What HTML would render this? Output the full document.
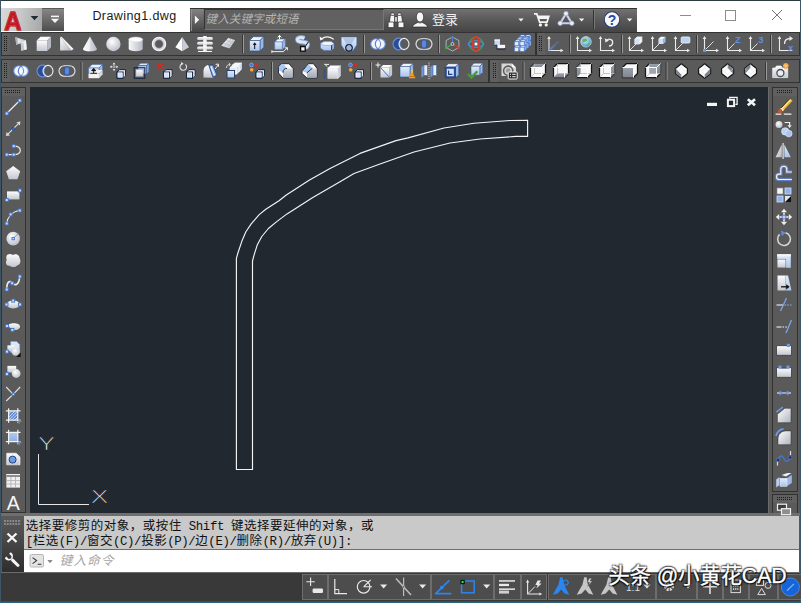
<!DOCTYPE html>
<html lang="zh-CN"><head><meta charset="utf-8"><title>Drawing1.dwg</title>
<style>
html,body{margin:0;padding:0;background:#404040;}
body{width:801px;height:603px;overflow:hidden;position:relative;font-family:"Liberation Sans","Noto Sans CJK SC",sans-serif;}
#app{position:absolute;left:0;top:0;width:801px;height:603px;overflow:hidden;background:#585858;}
.abs{position:absolute;}
#title{left:0;top:0;width:801px;height:32px;background:#fff;border-top:1px solid #2c3b3e;border-left:1px solid #39474f;border-right:1px solid #39474f;box-sizing:border-box;}
#abtn{left:1px;top:8px;width:41px;height:23px;background:linear-gradient(100deg,#d9d9d9,#c9c9c9 45%,#a6a6a6);}
#qbtn{left:42px;top:8px;width:21.5px;height:23px;background:linear-gradient(#858585,#4e4e4e);border-top:1px solid #5a5a5a;box-sizing:border-box;}
#dname{left:92.4px;top:8px;font-size:12.5px;color:#1a1a1a;letter-spacing:0.42px;white-space:nowrap;line-height:17px;}
#info{left:190px;top:8px;width:447px;height:24px;background:linear-gradient(#727272,#5a5a5a 45%,#454545);border-top:1px solid #333;box-sizing:border-box;}
#sbox{left:204px;top:9px;width:180px;height:21px;background:#616161;border:1px solid #343434;border-bottom-color:#777;border-right-color:#777;box-sizing:border-box;}
#sph{left:205.6px;top:11px;font-size:11.6px;font-style:italic;color:#b4b4b4;white-space:nowrap;line-height:16px;letter-spacing:0px;}
#login{left:432px;top:12px;font-size:13px;color:#f2f2f2;white-space:nowrap;line-height:16px;}
.tb{background:#5a5a5a;border:1px solid #323232;box-sizing:border-box;}
.grip{background:#606060;}
#draw{left:30px;top:87px;width:738px;height:426px;background:#212830;}
#cmdh{left:2px;top:516px;width:22px;height:56px;background:linear-gradient(#5a5a5a,#2e2e2e);}
#hist{left:24px;top:516px;width:775px;height:34px;background:#c9c9c9;border-bottom:1px solid #6e6e6e;box-sizing:border-box;font-family:"Liberation Mono","Noto Sans CJK SC",monospace;color:#111;}
.hl{position:absolute;left:1.7px;white-space:nowrap;font-size:12.5px;line-height:16px;letter-spacing:0.5px;}
.hl i{font-style:normal;font-size:12.4px;letter-spacing:-0.39px;}
#inp{left:24px;top:550px;width:775px;height:22px;background:#fff;}
#iph{left:59.6px;top:553px;font-size:12.8px;font-style:italic;color:#a6a6a6;white-space:nowrap;line-height:16px;letter-spacing:0.9px;}
#status{left:0;top:572px;width:801px;height:31px;background:#393939;}
#wm{left:608.5px;top:563px;font-size:21.2px;line-height:26px;color:#fff;white-space:nowrap;-webkit-text-stroke:0.35px #fff;text-shadow:1px 1px 1px #000,-1px -1px 1px rgba(0,0,0,.55),1px -1px 1px rgba(0,0,0,.55),-1px 1px 1px rgba(0,0,0,.55),0 0 3px rgba(0,0,0,.6);}
svg{position:absolute;left:0;top:0;overflow:visible;}
</style></head>
<body><div id="app">
<div id="title" class="abs"></div>
<div id="abtn" class="abs"></div><div id="qbtn" class="abs"></div>
<div id="dname" class="abs">Drawing1.dwg</div>
<div id="info" class="abs"></div><div id="sbox" class="abs"></div>
<div id="sph" class="abs">键入关键字或短语</div>
<div id="login" class="abs">登录</div>
<div class="abs tb" style="left:1px;top:32px;width:535px;height:24px"></div>
<div class="abs tb" style="left:536px;top:32px;width:264px;height:24px"></div>
<div class="abs tb" style="left:1px;top:59px;width:488px;height:24px"></div>
<div class="abs tb" style="left:489px;top:59px;width:311px;height:24px"></div>
<div class="abs tb" style="left:1px;top:87px;width:25px;height:426px"></div>
<div class="abs tb" style="left:772px;top:87px;width:26px;height:405px"></div>
<div class="abs tb" style="left:772px;top:494px;width:26px;height:24px"></div>
<div class="abs grip" style="left:2px;top:33px;width:8px;height:22px"></div>
<div class="abs grip" style="left:537px;top:33px;width:8px;height:22px"></div>
<div class="abs grip" style="left:2px;top:60px;width:8px;height:22px"></div>
<div class="abs grip" style="left:490px;top:60px;width:8px;height:22px"></div>
<div class="abs grip" style="left:2px;top:88px;width:23px;height:8px"></div>
<div class="abs grip" style="left:773px;top:88px;width:24px;height:8px"></div>
<div class="abs grip" style="left:773px;top:495px;width:24px;height:8px"></div>
<div id="draw" class="abs"></div>
<div class="abs" style="left:768px;top:87px;width:1px;height:426px;background:#6a6a6a"></div>
<div class="abs" style="left:0;top:513px;width:801px;height:3px;background:#6e6e6e"></div>
<div id="cmdh" class="abs"></div>
<div id="hist" class="abs"><div class="hl" style="top:3px">选择要修剪的对象，或按住<i> Shift </i>键选择要延伸的对象，或</div><div class="hl" style="top:18px"><i>[</i>栏选<i>(F)/</i>窗交<i>(C)/</i>投影<i>(P)/</i>边<i>(E)/</i>删除<i>(R)/</i>放弃<i>(U)]:</i></div></div>
<div id="inp" class="abs"></div>
<div id="iph" class="abs">键入命令</div>
<div id="status" class="abs"></div>
<div class="abs" style="left:0;top:0;width:1px;height:603px;background:#3e5566"></div><div class="abs" style="left:800px;top:0;width:1px;height:603px;background:#3e5566"></div>
<svg width="801" height="603" viewBox="0 0 801 603"><defs>
<linearGradient id="gG" x1="0" y1="0" x2="0" y2="1"><stop offset="0" stop-color="#fdfdfe"/><stop offset="1" stop-color="#c3c7cf"/></linearGradient>
<linearGradient id="gH" x1="0" y1="0" x2="1" y2="0"><stop offset="0" stop-color="#fafafc"/><stop offset="1" stop-color="#b4b9c2"/></linearGradient>
<linearGradient id="gB" x1="0" y1="0" x2="0" y2="1"><stop offset="0" stop-color="#e3edfb"/><stop offset="1" stop-color="#a9c4ea"/></linearGradient>
<linearGradient id="gD" x1="0" y1="0" x2="1" y2="1"><stop offset="0" stop-color="#fff"/><stop offset="1" stop-color="#aeb3bc"/></linearGradient>
<linearGradient id="gF" x1="0" y1="0" x2="0" y2="1"><stop offset="0" stop-color="#d6d9de"/><stop offset="1" stop-color="#a4a9b3"/></linearGradient>
<linearGradient id="gX" x1="0" y1="0" x2="0" y2="1"><stop offset="0" stop-color="#9aa1ab"/><stop offset="1" stop-color="#7f8690"/></linearGradient>
<linearGradient id="gQ" x1="0" y1="0" x2="0" y2="1"><stop offset="0" stop-color="#838383"/><stop offset="1" stop-color="#474747"/></linearGradient>
<radialGradient id="gS" cx="0.4" cy="0.35" r="0.7"><stop offset="0" stop-color="#fff"/><stop offset="1" stop-color="#b7bcc6"/></radialGradient>
<linearGradient id="gU" x1="0" y1="1" x2="1" y2="0"><stop offset="0" stop-color="#5b82c9"/><stop offset="1" stop-color="#5b82c9" stop-opacity="0.15"/></linearGradient>
<radialGradient id="gW" cx="0.4" cy="0.35" r="0.7"><stop offset="0" stop-color="#dff4fb"/><stop offset="1" stop-color="#3b8fc0"/></radialGradient>
</defs><g clip-path="url(#cpA)"><text transform="translate(12.9,29.9) scale(.9,1)" font-family="Liberation Sans,sans-serif" font-weight="bold" font-size="26.5" text-anchor="middle" fill="#c4181f" stroke="#b8151b" stroke-width="1.3" stroke-linejoin="round">A</text><text transform="translate(12.9,29.9) scale(.9,1)" font-family="Liberation Sans,sans-serif" font-weight="bold" font-size="26.5" text-anchor="middle" fill="none" stroke="#e8686b" stroke-width=".5" opacity=".7">A</text></g><clipPath id="cpA"><rect x="1" y="8" width="41" height="23"/></clipPath><path d="M30.6 16.099999999999998H38.4L34.5 20.3Z" fill="#1f2a33"/><rect x="51" y="15.6" width="8" height="1.6" fill="#f6f6f6"/><path d="M50.9 18.7H59.1L55 22.900000000000002Z" fill="#f6f6f6"/><rect x="191" y="9" width="12.5" height="22" fill="url(#gQ)"/><path d="M191.5 9V31" stroke="#8f8f8f" stroke-width="1"/><path d="M194.9 15.6L199.2 19.8L194.9 24Z" fill="#f4f4f4"/>
<g transform="translate(396,20)" fill="#f6f6f6" stroke="#2a2a2a" stroke-width=".7"><rect x="-1.6" y="-3.6" width="3.2" height="5.6" fill="#d4d4d4"/><path d="M-6.6 2.4L-5.6 -5.2H-1.4V2.4Z"/><path d="M6.6 2.4L5.6 -5.2H1.4V2.4Z"/><rect x="-5.2" y="-7" width="3.6" height="2.4" rx="1"/><rect x="1.6" y="-7" width="3.6" height="2.4" rx="1"/><rect x="-7.9" y="2" width="5.8" height="5.6" rx="1"/><rect x="2.1" y="2" width="5.8" height="5.6" rx="1"/></g>
<g transform="translate(420,20)" stroke="#2a2a2a" stroke-width=".7"><path d="M-7.8 7C-7 4.4 -4 3.6 -2.2 2.4H2.2C4 3.6 7 4.4 7.8 7Z" fill="#f6f6f6"/><ellipse cx="0" cy="-3" rx="3.7" ry="5" fill="#f6f6f6"/><path d="M-2.2 2.4C-1 3.4 1 3.4 2.2 2.4" fill="none" stroke="#8a8a8a" stroke-width=".8"/></g><path d="M518.3 18.4H523.7L521 21.6Z" fill="#f0f0f0"/>
<g transform="translate(542,19.5)" fill="none" stroke="#f4f4f4" stroke-width="1.7"><path d="M-8 -5.6H-5.2L-2.4 2.6H5L6.8 -3.2H-4.4" /><path d="M-3.8 -1.8H6" stroke-width="2.6"/><circle cx="-1.6" cy="5.4" r="1" fill="#f4f4f4" stroke-width="1.2"/><circle cx="4.2" cy="5.4" r="1" fill="#f4f4f4" stroke-width="1.2"/></g>
<g transform="translate(566,19)"><path d="M0 -5.4L5.8 4.2H-5.8Z" fill="none" stroke="#c9d3ea" stroke-width="2.1" stroke-linejoin="round"/><circle cx="0" cy="-5.4" r="2.3" fill="#e9edf7" stroke="#8e9cc2" stroke-width=".6"/><circle cx="-5.8" cy="4.2" r="2.3" fill="#e9edf7" stroke="#8e9cc2" stroke-width=".6"/><circle cx="5.8" cy="4.2" r="2.3" fill="#e9edf7" stroke="#8e9cc2" stroke-width=".6"/></g><path d="M578.9 18.4H584.3000000000001L581.6 21.6Z" fill="#f0f0f0"/><path d="M594.5 10V29" stroke="#777" stroke-width="1"/><path d="M593.5 10V29" stroke="#333" stroke-width="1"/><circle cx="612" cy="19.6" r="7.8" fill="#f7f7f7" stroke="#2b3f77" stroke-width="1.1"/><text x="612" y="24.6" font-family="Liberation Sans,sans-serif" font-weight="bold" font-size="14" text-anchor="middle" fill="#2348a6">?</text><path d="M626.9 18.4H632.3000000000001L629.6 21.6Z" fill="#f0f0f0"/><path d="M680 15.5H691" stroke="#8c8c8c" stroke-width="1"/><rect x="725.5" y="10.5" width="10" height="10" fill="none" stroke="#8c8c8c" stroke-width="1"/><path d="M772 10L782 20M782 10L772 20" stroke="#777" stroke-width="1"/><path d="M4.5 36V51 M6.5 36V51" stroke="#1e1e1e" stroke-width="1" stroke-dasharray="1 1"/>
<g transform="translate(21.2,44)"><path d="M-5.8 -6.8L4.7 -3.8L5.5 5.2L0.2 6.7L-0.5 -0.8L-5 0.7Z" fill="url(#gH)"/><path d="M4.7 -3.8L5.5 5.2L0.2 6.7L-0.5 -0.8Z" fill="#c4c8d0"/><path d="M-0.5 -0.8L4.7 -3.8L5.5 5.2L3 5.9L2.3 -1Z" fill="#eef0f3"/><path d="M-5.8 -6.8L-5 0.7L-3.2 0.1L-3.8 -6.2Z" fill="#a9aeb8"/></g>
<g transform="translate(43.7,44)"><path d="M-7 -3.5L-3.2 -7.3L7.3 -7.3L3.5 -3.5Z" fill="#fbfbfc"/><path d="M3.5 -3.5L7.3 -7.3L7.3 3.2L3.5 7.0Z" fill="#b5bac3"/><rect x="-7" y="-3.5" width="10.5" height="10.5" fill="url(#gG)"/></g>
<g transform="translate(66.6,44)"><path d="M-6.5 -7L-6.5 6.5L5 6.5Z" fill="url(#gD)"/><path d="M-6.5 -7L5 6.5L7 5L-5 -7.3Z" fill="#f4f5f7"/></g>
<g transform="translate(90,44)"><path d="M0 -7.5L-7 5A7 2.3 0 0 0 7 5Z" fill="url(#gH)"/><path d="M0 -7.5L-7 5A7 2.3 0 0 0 0 7.3Z" fill="#fff" opacity=".55"/></g>
<g transform="translate(113.4,44)"><circle r="7.2" fill="url(#gS)"/></g>
<g transform="translate(135.7,44)"><path d="M-7 -4.5V4.8A7 2.4 0 0 0 7 4.8V-4.5Z" fill="url(#gH)"/><ellipse cx="0" cy="-4.5" rx="7" ry="2.4" fill="#fdfdfe" stroke="#cfd2d8" stroke-width=".5"/></g>
<g transform="translate(159,44)"><circle r="5.7" fill="none" stroke="#d9dce1" stroke-width="3.1"/><circle r="6.6" fill="none" stroke="#f6f6f8" stroke-width="1"/><circle r="4.3" fill="none" stroke="#a9aeb7" stroke-width=".7"/></g>
<g transform="translate(182.2,44)"><path d="M0 -7L-6.8 3.2L0 7.2Z" fill="#fdfdfe"/><path d="M0 -7L6.8 3.2L0 7.2Z" fill="#c9cdd4"/></g>
<g transform="translate(205,44)"><rect x="-1.7" y="-8" width="3.4" height="15.2" fill="url(#gH)"/><rect x="-7.9" y="-7.1" width="15.8" height="3" rx="1.5" fill="url(#gG)"/><rect x="-7.9" y="-2.3" width="15.8" height="3" rx="1.5" fill="url(#gG)"/><rect x="-7.9" y="2.5" width="15.8" height="3" rx="1.5" fill="url(#gG)"/><rect x="-1.7" y="-8" width="3.4" height="15.2" fill="#fff" opacity=".55"/><rect x="-7" y="6.9" width="14" height="1.1" fill="#f2f2f2"/></g>
<g transform="translate(228.6,44)"><path d="M-7.9 1.9L-0.4 -6.4L7.1 -4.1L1.1 4.9Z" fill="url(#gD)" stroke="#2e2e2e" stroke-width=".5"/><path d="M-5.4 -0.9L3.1 1.9M-2.9 -3.7L5.1 -1.1M-4.9 2.9L3 -5.4M-1.9 3.9L5.4 -4.6" stroke="#b4b9c2" stroke-width=".6" fill="none"/></g>
<g transform="translate(256.5,44)"><path d="M-7 -3.5L-3.2 -7.3L7.3 -7.3L3.5 -3.5Z" fill="#eef4fd" stroke="#2f4f86" stroke-width="0.6" stroke-linejoin="round"/><path d="M3.5 -3.5L7.3 -7.3L7.3 3.2L3.5 7.0Z" fill="#9bb9e6" stroke="#2f4f86" stroke-width="0.6" stroke-linejoin="round"/><rect x="-7" y="-3.5" width="10.5" height="10.5" fill="url(#gB)" stroke="#2f4f86" stroke-width="0.6" stroke-linejoin="round"/><path d="M-1.8 5V-0.6" stroke="#111" stroke-width="1"/><path d="M-3.7 1L-1.8 -1.8L0.1 1Z" fill="#111"/></g>
<g transform="translate(279.7,44)"><path d="M-5 -2L-2 -5L5.6 -5L2.5999999999999996 -2Z" fill="#eef4fd" stroke="#5578b5" stroke-width="0.6" stroke-linejoin="round"/><path d="M2.5999999999999996 -2L5.6 -5L5.6 2.5999999999999996L2.5999999999999996 5.6Z" fill="#9bb9e6" stroke="#5578b5" stroke-width="0.6" stroke-linejoin="round"/><rect x="-5" y="-2" width="7.6" height="7.6" fill="url(#gB)" stroke="#5578b5" stroke-width="0.6" stroke-linejoin="round"/><path d="M-0.2 -5V-8.4M-2 -6.6L-0.2 -8.6L1.6 -6.6" stroke="#fff" stroke-width="1" fill="none"/><path d="M-7.8 7.6H4M-7.8 6.2V9M3.6 7.6L7.6 3.6M5.2 3.8H7.7V6.3" stroke="#fff" stroke-width=".9" fill="none"/></g>
<g transform="translate(303,44)"><path d="M1.5 -5.8C-3 -7.5 -6.2 -5.8 -5.4 -3.6C-4.6 -1.6 0.5 -2.4 3.4 -1.2C5.6 -0.2 4.6 2.4 2.6 4" fill="none" stroke="#7d9fd6" stroke-width="4.8"/><path d="M1.5 -5.8C-3 -7.5 -6.2 -5.8 -5.4 -3.6C-4.6 -1.6 0.5 -2.4 3.4 -1.2C5.6 -0.2 4.6 2.4 2.6 4" fill="none" stroke="#d9e6f8" stroke-width="3"/><path d="M2.4 2.4L5.4 -2.2" stroke="#111" stroke-width="1"/><rect x="-2.4" y="2.6" width="4.6" height="4.6" fill="#f6f6f6" stroke="#0c0c0c" stroke-width="1.3"/></g>
<g transform="translate(327,44)"><path d="M-6.5 -0.5L-3 -2.5H4L7 -0.5V4.2L4 6.6H-3L-6.5 4.2Z" fill="url(#gB)" stroke="#4f74b3" stroke-width=".5"/><path d="M-6.5 -0.5L-3 -2.5H4L7 -0.5L4 1.5H-3Z" fill="#eef4fd" stroke="#4f74b3" stroke-width=".4"/><path d="M4 1.5L7 -0.5V4.2L4 6.6Z" fill="#8fb0e2"/><path d="M4.6 1.2V6" stroke="#111" stroke-width=".8"/><path d="M-5.6 -5C-2 -8 3 -8 6.8 -4.6" fill="none" stroke="#f4f4f4" stroke-width="1.2"/><path d="M-7.4 -7.4L-6.8 -3.6L-3.4 -5Z" fill="#f4f4f4"/></g>
<g transform="translate(349,44)"><path d="M-7.8 -7H7.8V1L4.4 6.2C2.5 8 -2.5 8 -4.4 6.2L-7.8 1Z" fill="url(#gB)" stroke="#3d5f9e" stroke-width=".5"/><path d="M-6.5 -6.5H6.5L1.5 1.5H-1.5Z" fill="#8fa9d6" opacity=".55"/><circle cx="0" cy="3.8" r="3.3" fill="#a3b4d4" stroke="#17233f" stroke-width="1.2"/></g>
<g transform="translate(378,44)"><ellipse cx="-2.3" cy="0" rx="5" ry="5.2" fill="#eef3fc" stroke="#5f86d8" stroke-width="1.1"/><ellipse cx="2.3" cy="0" rx="5" ry="5.2" fill="#eef3fc" stroke="#5f86d8" stroke-width="1.1"/><path d="M0 -4.6A5 5.2 0 0 1 0 4.6A5 5.2 0 0 1 0 -4.6Z" fill="#f8faff" stroke="#4a6cc0" stroke-width=".8"/></g>
<g transform="translate(401,44)"><path d="M0.8 -4.6A5.4 5.8 0 1 0 0.8 4.6A5.4 5.8 0 0 1 0.8 -4.6Z" fill="#2a4d9b" stroke="#6f95df" stroke-width="1.2"/><ellipse cx="3" cy="0" rx="5" ry="5.6" fill="none" stroke="#eceef2" stroke-width="1.1"/></g>
<g transform="translate(424,44)"><rect x="-8" y="-5.3" width="16" height="10.6" rx="5.3" fill="none" stroke="#e4e6ea" stroke-width="1.1"/><ellipse cx="0" cy="0" rx="2.7" ry="4.2" fill="#5e88d6" stroke="#2e55a8" stroke-width="1"/></g>
<g transform="translate(452.5,44)"><path d="M0 -7L6.4 -3.5V3.5L0 7L-6.4 3.5V-3.5Z" fill="none" stroke="#c4c4c4" stroke-width=".8"/><path d="M0 0V-6" stroke="#4a7fe0" stroke-width="1.1"/><path d="M0 0L-5.4 3.4" stroke="#3bb54a" stroke-width="1.1"/><path d="M0 0L5.4 3.4" stroke="#e23b2e" stroke-width="1.1"/><circle cx="0" cy="-6.4" r="1.4" fill="#4a7fe0"/><circle cx="-6" cy="3.8" r="1.4" fill="#3bb54a"/><circle cx="6" cy="3.8" r="1.4" fill="#e23b2e"/><circle r="1.5" fill="#555" stroke="#eee" stroke-width=".7"/></g>
<g transform="translate(476,44)"><circle r="6.8" fill="none" stroke="#3a9a48" stroke-width="1.4"/><ellipse rx="7.6" ry="3.4" fill="none" stroke="#3f8fe0" stroke-width="1.3"/><ellipse rx="3.4" ry="7.2" fill="none" stroke="#dd3a2c" stroke-width="2.1"/><rect x="-1.4" y="-1.4" width="2.8" height="2.8" fill="#fff"/></g>
<g transform="translate(499.7,44)"><path d="M-5.2 -4.5H0.3V1.5H-5.2Z" fill="#c9dcf7"/><path d="M-5.2 -4.5H0.3V-3.2H-5.2Z" fill="#eef4fd"/><path d="M-2.8 0.8H5.4V4.2H-2.8Z" fill="#f4f6fa"/><path d="M-5.4 1.5L-2.8 1V5.2H5.4V4.2" fill="none" stroke="#1e2a44" stroke-width="1"/></g>
<g transform="translate(522,44)"><path d="M-2.6 -7.4L-0.9000000000000001 -9.1L3.3999999999999995 -9.1L1.6999999999999997 -7.4Z" fill="#ffffff" stroke="#3568c8" stroke-width="0.6" stroke-linejoin="round"/><path d="M1.6999999999999997 -7.4L3.3999999999999995 -9.1L3.3999999999999995 -4.800000000000001L1.6999999999999997 -3.1000000000000005Z" fill="#a9c8f2" stroke="#3568c8" stroke-width="0.6" stroke-linejoin="round"/><rect x="-2.6" y="-7.4" width="4.3" height="4.3" fill="#e3eefc" stroke="#3568c8" stroke-width="0.6" stroke-linejoin="round"/><path d="M3.0 -7.4L4.7 -9.1L9.0 -9.1L7.3 -7.4Z" fill="#ffffff" stroke="#3568c8" stroke-width="0.6" stroke-linejoin="round"/><path d="M7.3 -7.4L9.0 -9.1L9.0 -4.800000000000001L7.3 -3.1000000000000005Z" fill="#a9c8f2" stroke="#3568c8" stroke-width="0.6" stroke-linejoin="round"/><rect x="3.0" y="-7.4" width="4.3" height="4.3" fill="#e3eefc" stroke="#3568c8" stroke-width="0.6" stroke-linejoin="round"/><path d="M-2.6 -1.8L-0.9000000000000001 -3.5L3.3999999999999995 -3.5L1.6999999999999997 -1.8Z" fill="#ffffff" stroke="#3568c8" stroke-width="0.6" stroke-linejoin="round"/><path d="M1.6999999999999997 -1.8L3.3999999999999995 -3.5L3.3999999999999995 0.8L1.6999999999999997 2.5Z" fill="#a9c8f2" stroke="#3568c8" stroke-width="0.6" stroke-linejoin="round"/><rect x="-2.6" y="-1.8" width="4.3" height="4.3" fill="#e3eefc" stroke="#3568c8" stroke-width="0.6" stroke-linejoin="round"/><path d="M3.0 -1.8L4.7 -3.5L9.0 -3.5L7.3 -1.8Z" fill="#ffffff" stroke="#3568c8" stroke-width="0.6" stroke-linejoin="round"/><path d="M7.3 -1.8L9.0 -3.5L9.0 0.8L7.3 2.5Z" fill="#a9c8f2" stroke="#3568c8" stroke-width="0.6" stroke-linejoin="round"/><rect x="3.0" y="-1.8" width="4.3" height="4.3" fill="#e3eefc" stroke="#3568c8" stroke-width="0.6" stroke-linejoin="round"/><path d="M-5.1 -4.9L-3.3999999999999995 -6.6000000000000005L0.9000000000000001 -6.6000000000000005L-0.7999999999999998 -4.9Z" fill="#ffffff" stroke="#3568c8" stroke-width="0.6" stroke-linejoin="round"/><path d="M-0.7999999999999998 -4.9L0.9000000000000001 -6.6000000000000005L0.9000000000000001 -2.3000000000000007L-0.7999999999999998 -0.6000000000000005Z" fill="#a9c8f2" stroke="#3568c8" stroke-width="0.6" stroke-linejoin="round"/><rect x="-5.1" y="-4.9" width="4.3" height="4.3" fill="#e3eefc" stroke="#3568c8" stroke-width="0.6" stroke-linejoin="round"/><path d="M0.5 -4.9L2.2 -6.6000000000000005L6.5 -6.6000000000000005L4.8 -4.9Z" fill="#ffffff" stroke="#3568c8" stroke-width="0.6" stroke-linejoin="round"/><path d="M4.8 -4.9L6.5 -6.6000000000000005L6.5 -2.3000000000000007L4.8 -0.6000000000000005Z" fill="#a9c8f2" stroke="#3568c8" stroke-width="0.6" stroke-linejoin="round"/><rect x="0.5" y="-4.9" width="4.3" height="4.3" fill="#e3eefc" stroke="#3568c8" stroke-width="0.6" stroke-linejoin="round"/><path d="M-5.1 0.7L-3.3999999999999995 -1.0L0.9000000000000001 -1.0L-0.7999999999999998 0.7Z" fill="#ffffff" stroke="#3568c8" stroke-width="0.6" stroke-linejoin="round"/><path d="M-0.7999999999999998 0.7L0.9000000000000001 -1.0L0.9000000000000001 3.3L-0.7999999999999998 5.0Z" fill="#a9c8f2" stroke="#3568c8" stroke-width="0.6" stroke-linejoin="round"/><rect x="-5.1" y="0.7" width="4.3" height="4.3" fill="#e3eefc" stroke="#3568c8" stroke-width="0.6" stroke-linejoin="round"/><path d="M0.5 0.7L2.2 -1.0L6.5 -1.0L4.8 0.7Z" fill="#ffffff" stroke="#3568c8" stroke-width="0.6" stroke-linejoin="round"/><path d="M4.8 0.7L6.5 -1.0L6.5 3.3L4.8 5.0Z" fill="#a9c8f2" stroke="#3568c8" stroke-width="0.6" stroke-linejoin="round"/><rect x="0.5" y="0.7" width="4.3" height="4.3" fill="#e3eefc" stroke="#3568c8" stroke-width="0.6" stroke-linejoin="round"/><path d="M-7.6 -2.4L-5.8999999999999995 -4.1L-1.5999999999999999 -4.1L-3.3 -2.4Z" fill="#ffffff" stroke="#3568c8" stroke-width="0.6" stroke-linejoin="round"/><path d="M-3.3 -2.4L-1.5999999999999999 -4.1L-1.5999999999999999 0.19999999999999996L-3.3 1.9Z" fill="#a9c8f2" stroke="#3568c8" stroke-width="0.6" stroke-linejoin="round"/><rect x="-7.6" y="-2.4" width="4.3" height="4.3" fill="#e3eefc" stroke="#3568c8" stroke-width="0.6" stroke-linejoin="round"/><path d="M-2.0 -2.4L-0.30000000000000004 -4.1L4.0 -4.1L2.3 -2.4Z" fill="#ffffff" stroke="#3568c8" stroke-width="0.6" stroke-linejoin="round"/><path d="M2.3 -2.4L4.0 -4.1L4.0 0.19999999999999996L2.3 1.9Z" fill="#a9c8f2" stroke="#3568c8" stroke-width="0.6" stroke-linejoin="round"/><rect x="-2.0" y="-2.4" width="4.3" height="4.3" fill="#e3eefc" stroke="#3568c8" stroke-width="0.6" stroke-linejoin="round"/><path d="M-7.6 3.2L-5.8999999999999995 1.5000000000000002L-1.5999999999999999 1.5000000000000002L-3.3 3.2Z" fill="#ffffff" stroke="#3568c8" stroke-width="0.6" stroke-linejoin="round"/><path d="M-3.3 3.2L-1.5999999999999999 1.5000000000000002L-1.5999999999999999 5.8L-3.3 7.5Z" fill="#a9c8f2" stroke="#3568c8" stroke-width="0.6" stroke-linejoin="round"/><rect x="-7.6" y="3.2" width="4.3" height="4.3" fill="#e3eefc" stroke="#3568c8" stroke-width="0.6" stroke-linejoin="round"/><path d="M-2.0 3.2L-0.30000000000000004 1.5000000000000002L4.0 1.5000000000000002L2.3 3.2Z" fill="#ffffff" stroke="#3568c8" stroke-width="0.6" stroke-linejoin="round"/><path d="M2.3 3.2L4.0 1.5000000000000002L4.0 5.8L2.3 7.5Z" fill="#a9c8f2" stroke="#3568c8" stroke-width="0.6" stroke-linejoin="round"/><rect x="-2.0" y="3.2" width="4.3" height="4.3" fill="#e3eefc" stroke="#3568c8" stroke-width="0.6" stroke-linejoin="round"/></g><path d="M243.5 35V53" stroke="#9b9b9b" stroke-width="1"/><path d="M242.5 35V53" stroke="#383838" stroke-width="1"/><path d="M364.5 35V53" stroke="#9b9b9b" stroke-width="1"/><path d="M363.5 35V53" stroke="#383838" stroke-width="1"/><path d="M439.5 35V53" stroke="#9b9b9b" stroke-width="1"/><path d="M438.5 35V53" stroke="#383838" stroke-width="1"/><path d="M539.5 36V51 M541.5 36V51" stroke="#1e1e1e" stroke-width="1" stroke-dasharray="1 1"/>
<g transform="translate(555.5,44)"><path d="M-6.5 -6.5V6.5H6.5" fill="none" stroke="#ececec" stroke-width="1.1"/><path d="M-8.3 -5L-6.5 -8L-4.7 -5Z M5 4.7L8 6.5L5 8.3Z" fill="#ececec"/><path d="M-6 6L3.5 -3" stroke="url(#gU)" stroke-width="2.2"/></g>
<g transform="translate(584,44)"><path d="M-6.5 -6.5V6.5H6.5" fill="none" stroke="#ececec" stroke-width="1.1"/><path d="M-8.3 -5L-6.5 -8L-4.7 -5Z M5 4.7L8 6.5L5 8.3Z" fill="#ececec"/><circle cx="2" cy="-2.2" r="5.3" fill="url(#gW)" stroke="#dfeff6" stroke-width=".6"/><path d="M-1 -5C1 -6 3 -5.5 3.5 -3.5C2 -2 0.5 -2.5 -1 -1.5C-2 -3 -2 -4 -1 -5ZM3 0.5C4.5 -0.5 6 0 6.3 -1C6 1.5 4.5 2.6 3 2.6Z" fill="#5fb56a"/></g>
<g transform="translate(607,44)"><path d="M-6.5 -6.5V6.5H6.5" fill="none" stroke="#ececec" stroke-width="1.1"/><path d="M-8.3 -5L-6.5 -8L-4.7 -5Z M5 4.7L8 6.5L5 8.3Z" fill="#ececec"/><path d="M-0.5 -3.5C2.5 -6.5 6.5 -4 5.5 -0.5C5 1.3 3.5 2 2 2" fill="none" stroke="#ececec" stroke-width="1.3"/><path d="M-2.2 -5.8L-1.6 -1.6L2 -3.4Z" fill="#ececec"/></g>
<g transform="translate(636,44)"><path d="M-6.5 -6.5V6.5H6.5" fill="none" stroke="#ececec" stroke-width="1.1"/><path d="M-8.3 -5L-6.5 -8L-4.7 -5Z M5 4.7L8 6.5L5 8.3Z" fill="#ececec"/><path d="M-6 6L0.5 -0.5" stroke="#e0e0e0" stroke-width="1"/><path d="M-1.2 -4.8L1.0999999999999999 -7.1L5.8999999999999995 -7.1L3.5999999999999996 -4.8Z" fill="#f3f7fe" stroke="#ececec" stroke-width="0.8" stroke-linejoin="round"/><path d="M3.5999999999999996 -4.8L5.8999999999999995 -7.1L5.8999999999999995 -2.3L3.5999999999999996 0.0Z" fill="#f3f7fe" stroke="#ececec" stroke-width="0.8" stroke-linejoin="round"/><rect x="-1.2" y="-4.8" width="4.8" height="4.8" fill="#cfe0f8" stroke="#ececec" stroke-width="0.8" stroke-linejoin="round"/></g>
<g transform="translate(659,44)"><path d="M-6.5 -6.5V6.5H6.5" fill="none" stroke="#ececec" stroke-width="1.1"/><path d="M-8.3 -5L-6.5 -8L-4.7 -5Z M5 4.7L8 6.5L5 8.3Z" fill="#ececec"/><path d="M-6 6L0.5 -0.5" stroke="#e0e0e0" stroke-width="1"/><path d="M-0.6 -5L1.6 -7.2L6.6000000000000005 -7.2L4.4 -5Z" fill="#f3f7fe"/><path d="M4.4 -5L6.6000000000000005 -7.2L6.6000000000000005 -2.2L4.4 0Z" fill="#9bb9e6"/><rect x="-0.6" y="-5" width="5" height="5" fill="#cfe0f8"/></g>
<g transform="translate(682,44)"><path d="M-6.5 -6.5V6.5H6.5" fill="none" stroke="#ececec" stroke-width="1.1"/><path d="M-8.3 -5L-6.5 -8L-4.7 -5Z M5 4.7L8 6.5L5 8.3Z" fill="#ececec"/><path d="M-6 6L0.5 -0.5" stroke="#e0e0e0" stroke-width="1"/><rect x="-0.8" y="-7" width="8.6" height="6" rx="1" fill="#b9d3f5" stroke="#f0f0f0" stroke-width=".9"/></g>
<g transform="translate(711,44)"><path d="M-6.5 -6.5V6.5H6.5" fill="none" stroke="#ececec" stroke-width="1.1"/><path d="M-8.3 -5L-6.5 -8L-4.7 -5Z M5 4.7L8 6.5L5 8.3Z" fill="#ececec"/><path d="M-6 6L2.5 -2.5" stroke="#dcdcdc" stroke-width="1"/><rect x="-8" y="5" width="3" height="3" fill="#6c95e0"/></g>
<g transform="translate(734,44)"><path d="M-6.5 -6.5V6.5H6.5" fill="none" stroke="#ececec" stroke-width="1.1"/><path d="M-8.3 -5L-6.5 -8L-4.7 -5Z M5 4.7L8 6.5L5 8.3Z" fill="#ececec"/><path d="M-6 6L0.5 -0.5" stroke="#e0e0e0" stroke-width="1"/><text x="4" y="-1" font-family="Liberation Sans,sans-serif" font-weight="bold" font-size="9.5" text-anchor="middle" fill="#5f8ee6">Z</text></g>
<g transform="translate(757,44)"><path d="M-6.5 -6.5V6.5H6.5" fill="none" stroke="#ececec" stroke-width="1.1"/><path d="M-8.3 -5L-6.5 -8L-4.7 -5Z M5 4.7L8 6.5L5 8.3Z" fill="#ececec"/><path d="M-6 6L0.5 -0.5" stroke="#e0e0e0" stroke-width="1"/><text x="4" y="-1" font-family="Liberation Sans,sans-serif" font-weight="bold" font-size="9.5" text-anchor="middle" fill="#5f8ee6">3</text></g>
<g transform="translate(786,44)"><path d="M-6.5 -6.5V6.5H6.5" fill="none" stroke="#ececec" stroke-width="1.1"/><path d="M-8.3 -5L-6.5 -8L-4.7 -5Z" fill="#ececec"/><path d="M-1.5 0C-1.5 -4 1 -5.5 4.5 -5.5" fill="none" stroke="#ececec" stroke-width="1.3"/><path d="M3.5 -8L7 -5.4L3.5 -3Z" fill="#ececec"/><text x="4.6" y="6.6" font-family="Liberation Sans,sans-serif" font-weight="bold" font-size="9.5" text-anchor="middle" fill="#5f8ee6">x</text></g><path d="M570.5 35V53" stroke="#9b9b9b" stroke-width="1"/><path d="M569.5 35V53" stroke="#383838" stroke-width="1"/><path d="M622.5 35V53" stroke="#9b9b9b" stroke-width="1"/><path d="M621.5 35V53" stroke="#383838" stroke-width="1"/><path d="M697.5 35V53" stroke="#9b9b9b" stroke-width="1"/><path d="M696.5 35V53" stroke="#383838" stroke-width="1"/><path d="M771.5 35V53" stroke="#9b9b9b" stroke-width="1"/><path d="M770.5 35V53" stroke="#383838" stroke-width="1"/><path d="M4.5 63V78 M6.5 63V78" stroke="#1e1e1e" stroke-width="1" stroke-dasharray="1 1"/>
<g transform="translate(21,71)"><ellipse cx="-2.3" cy="0" rx="5" ry="5.2" fill="#eef3fc" stroke="#5f86d8" stroke-width="1.1"/><ellipse cx="2.3" cy="0" rx="5" ry="5.2" fill="#eef3fc" stroke="#5f86d8" stroke-width="1.1"/><path d="M0 -4.6A5 5.2 0 0 1 0 4.6A5 5.2 0 0 1 0 -4.6Z" fill="#f8faff" stroke="#4a6cc0" stroke-width=".8"/></g>
<g transform="translate(45,71)"><path d="M0.8 -4.6A5.4 5.8 0 1 0 0.8 4.6A5.4 5.8 0 0 1 0.8 -4.6Z" fill="#2a4d9b" stroke="#6f95df" stroke-width="1.2"/><ellipse cx="3" cy="0" rx="5" ry="5.6" fill="none" stroke="#eceef2" stroke-width="1.1"/></g>
<g transform="translate(67,71)"><rect x="-8" y="-5.3" width="16" height="10.6" rx="5.3" fill="none" stroke="#e4e6ea" stroke-width="1.1"/><ellipse cx="0" cy="0" rx="2.7" ry="4.2" fill="#5e88d6" stroke="#2e55a8" stroke-width="1"/></g>
<g transform="translate(95.5,71)"><path d="M-7 -3L-3.4 -6.6L7.1 -6.6L3.5 -3Z" fill="#eaf1fc" stroke="#3a5f9a" stroke-width="0.5" stroke-linejoin="round"/><path d="M3.5 -3L7.1 -6.6L7.1 -1.6L3.5 2Z" fill="#9dbbe8" stroke="#3a5f9a" stroke-width="0.5" stroke-linejoin="round"/><rect x="-7" y="-3" width="10.5" height="5" fill="#cfe0f7" stroke="#3a5f9a" stroke-width="0.5" stroke-linejoin="round"/><path d="M-7 2.6L-3.4 -1.0L7.1 -1.0L3.5 2.6Z" fill="#f2f2f2"/><path d="M3.5 2.6L7.1 -1.0L7.1 3.599999999999999L3.5 7.199999999999999Z" fill="#d5d8de"/><rect x="-7" y="2.6" width="10.5" height="4.6" fill="#f2f2f2"/><path d="M-1.8 2V-1.8M-3.8 -0.3L-1.8 -2.6L0.2 -0.3Z" stroke="#111" stroke-width="1" fill="#111"/><path d="M-5 2.3H1.5" stroke="#111" stroke-width=".9"/></g>
<g transform="translate(118.5,71)"><path d="M-1.4 1L0.8999999999999999 -1.2999999999999998H6.8999999999999995V4.7L4.6 7H-1.4Z" fill="#fafbfd" stroke="#101c38" stroke-width="1" stroke-linejoin="round"/><path d="M4.6 1V7L6.499999999999999 4.7V-0.6999999999999998Z" fill="#e4e9f2"/><rect x="-1.4" y="1" width="6" height="6" fill="#cfe3fb" stroke="#101c38" stroke-width="1"/><rect x="-0.4999999999999999" y="1.9" width="4.2" height="4.2" fill="none" stroke="#f4f8ff" stroke-width=".6"/><path d="M-4.5 -8V-0.5M-8.2 -4.2H-0.8" stroke="#e8e8e8" stroke-width=".9" stroke-dasharray="1.2 .8"/><path d="M-5.9 -6.6L-4.5 -8.4L-3.1 -6.6ZM-5.9 -1.8L-4.5 0L-3.1 -1.8ZM-6.8 -5.6L-8.6 -4.2L-6.8 -2.8ZM-2.2 -5.6L-0.4 -4.2L-2.2 -2.8Z" fill="#e8e8e8"/></g>
<g transform="translate(141.5,71)"><path d="M-3.5 -5.5L-0.8999999999999999 -7.8L7.6 -7.8L5.0 -5.5Z" fill="#dce8f9" stroke="#2f4f86" stroke-width="0.5" stroke-linejoin="round"/><path d="M5.0 -5.5L7.6 -7.8L7.6 0.7000000000000002L5.0 3.0Z" fill="#7fa2d9" stroke="#2f4f86" stroke-width="0.5" stroke-linejoin="round"/><rect x="-3.5" y="-5.5" width="8.5" height="8.5" fill="#a9c4ea" stroke="#2f4f86" stroke-width="0.5" stroke-linejoin="round"/><rect x="-7.3" y="-3.3" width="10.6" height="10.6" fill="none" stroke="#16233d" stroke-width="1"/><rect x="-5.6" y="-1.6" width="7.2" height="7.2" fill="url(#gG)" stroke="#8c9097" stroke-width=".5"/></g>
<g transform="translate(165,71)"><path d="M-1.4 1L0.8999999999999999 -1.2999999999999998H6.8999999999999995V4.7L4.6 7H-1.4Z" fill="#fafbfd" stroke="#101c38" stroke-width="1" stroke-linejoin="round"/><path d="M4.6 1V7L6.499999999999999 4.7V-0.6999999999999998Z" fill="#e4e9f2"/><rect x="-1.4" y="1" width="6" height="6" fill="#cfe3fb" stroke="#101c38" stroke-width="1"/><rect x="-0.4999999999999999" y="1.9" width="4.2" height="4.2" fill="none" stroke="#f4f8ff" stroke-width=".6"/><path d="M-7.2 -7L-2.4 -2.4M-2.4 -7L-7.2 -2.4" stroke="#e0241b" stroke-width="1.9"/></g>
<g transform="translate(188,71)"><path d="M-1.4 1L0.8999999999999999 -1.2999999999999998H6.8999999999999995V4.7L4.6 7H-1.4Z" fill="#fafbfd" stroke="#101c38" stroke-width="1" stroke-linejoin="round"/><path d="M4.6 1V7L6.499999999999999 4.7V-0.6999999999999998Z" fill="#e4e9f2"/><rect x="-1.4" y="1" width="6" height="6" fill="#cfe3fb" stroke="#101c38" stroke-width="1"/><rect x="-0.4999999999999999" y="1.9" width="4.2" height="4.2" fill="none" stroke="#f4f8ff" stroke-width=".6"/><path d="M-2.6 -6.6A3.3 3.3 0 1 1 -6.2 -7" fill="none" stroke="#e2e2e2" stroke-width="1.1"/><path d="M-7 -9L-4.3 -7.3L-7 -5.6Z" fill="#e2e2e2"/></g>
<g transform="translate(211,71)"><path d="M-7.5 6.6V0C-7.5 -3.5 -5 -6 -2 -6H2L6 4L1.8 6.8Z" fill="url(#gG)"/><path d="M-2.2 -6H2L6 4L2 6.4Z" fill="#8db0e6" stroke="#23407d" stroke-width=".9" stroke-linejoin="round"/><path d="M0 -4.6L3.6 4.6" stroke="#eaf2ff" stroke-width="1.3"/><path d="M4.2 -2L7.2 -6.4M4.6 -6.6L7.4 -7L7.6 -4.2" stroke="#e8e8e8" stroke-width="1" fill="none"/></g>
<g transform="translate(234,71)"><path d="M-1.5 -6L0.7999999999999998 -8L7.3 -8L5.0 -6Z" fill="#f6f9fe" stroke="#f4f6fa" stroke-width="0.8" stroke-linejoin="round"/><path d="M5.0 -6L7.3 -8L7.3 -1.5L5.0 0.5Z" fill="#c9d9f2" stroke="#f4f6fa" stroke-width="0.8" stroke-linejoin="round"/><rect x="-1.5" y="-6" width="6.5" height="6.5" fill="#dfe9f8" stroke="#f4f6fa" stroke-width="0.8" stroke-linejoin="round"/><path d="M-4 -3.4L-1.7000000000000002 -5.4L4.8 -5.4L2.5 -3.4Z" fill="#f6f9fe" stroke="#f4f6fa" stroke-width="0.8" stroke-linejoin="round"/><path d="M2.5 -3.4L4.8 -5.4L4.8 1.1L2.5 3.1Z" fill="#c9d9f2" stroke="#f4f6fa" stroke-width="0.8" stroke-linejoin="round"/><rect x="-4" y="-3.4" width="6.5" height="6.5" fill="#dfe9f8" stroke="#f4f6fa" stroke-width="0.8" stroke-linejoin="round"/><rect x="-7" y="-0.5" width="7.5" height="7.5" fill="url(#gB)" stroke="#27406f" stroke-width="1"/><path d="M-7.5 -3C-7.5 -5.5 -6 -6.5 -4.2 -6.5M-5.2 -8L-3.6 -6.5L-5.2 -5" stroke="#e8e8e8" stroke-width=".9" fill="none"/></g>
<g transform="translate(257.5,71)"><path d="M-1.4 1L0.8999999999999999 -1.2999999999999998H6.8999999999999995V4.7L4.6 7H-1.4Z" fill="#fafbfd" stroke="#101c38" stroke-width="1" stroke-linejoin="round"/><path d="M4.6 1V7L6.499999999999999 4.7V-0.6999999999999998Z" fill="#e4e9f2"/><rect x="-1.4" y="1" width="6" height="6" fill="#cfe3fb" stroke="#101c38" stroke-width="1"/><rect x="-0.4999999999999999" y="1.9" width="4.2" height="4.2" fill="none" stroke="#f4f8ff" stroke-width=".6"/><circle cx="-6" cy="-6" r="1.9" fill="#3f78d8" stroke="#a9c6f5" stroke-width=".5"/><circle cx="-1.2" cy="-6.2" r="1.9" fill="#d92a20"/><circle cx="-5.8" cy="-1.2" r="1.9" fill="#ef8d1f"/><path d="M-6.7 -2.1L-4.9 -0.3M-4.9 -2.1L-6.7 -0.3" stroke="#ffd9a0" stroke-width=".5"/></g>
<g transform="translate(286,71)"><path d="M-7.5 -2C-7.5 -5.5 -5.5 -7.3 -2.5 -7.3H3L7 -2.6V7H-3L-7.5 2Z" fill="#fdfdfd" stroke="#16223e" stroke-width=".9" stroke-linejoin="round"/><path d="M-3 6.6V0.5C-3 -1.5 -1.5 -2.6 0.5 -2.6H6.6V6.6Z" fill="url(#gF)"/><path d="M-7.1 -2C-7.1 -5.2 -5.3 -6.9 -2.5 -6.9L0.8 -2.6C-1.5 -2.6 -3 -1.5 -3 1.6L-7 -0.4Z" fill="#a9c8f2"/><path d="M1 -2.6C-1.5 -2.6 -3 -1.5 -3 1.7" fill="none" stroke="#16223e" stroke-width=".9"/></g>
<g transform="translate(310,71)"><path d="M-8 0.5L-1.5 -7.3H3.5L7 -2.6V7H-3L-8 2.5Z" fill="#fdfdfd" stroke="#16223e" stroke-width=".9" stroke-linejoin="round"/><path d="M-3 6.6V1.6L2 -2.6H6.6V6.6Z" fill="url(#gF)"/><path d="M-7.5 0.6L-1.4 -6.8L2.3 -2.8L-3.1 1.8Z" fill="#a9c8f2"/><path d="M2.4 -2.8L-3.2 1.9" fill="none" stroke="#16223e" stroke-width=".9"/></g>
<g transform="translate(333,71)"><path d="M-5.2 -2.8L-2.6 -5.199999999999999L7.4 -5.199999999999999L4.8 -2.8Z" fill="#fcfcfc" stroke="#fbfbfb" stroke-width="0.5" stroke-linejoin="round"/><path d="M4.8 -2.8L7.4 -5.199999999999999L7.4 5.0L4.8 7.3999999999999995Z" fill="#c4c8d0" stroke="#fbfbfb" stroke-width="0.5" stroke-linejoin="round"/><rect x="-5.2" y="-2.8" width="10" height="10.2" fill="url(#gG)" stroke="#fbfbfb" stroke-width="0.5" stroke-linejoin="round"/><path d="M-8.5 -2V7.6" stroke="#3a4f86" stroke-width="1.5"/><path d="M-8.6 -6.6H-4M-8.4 -6.8L-5.6 -4.4" stroke="#ececec" stroke-width="1"/></g>
<g transform="translate(356.5,71)"><path d="M-1.4 1L0.8999999999999999 -1.2999999999999998H6.8999999999999995V4.7L4.6 7H-1.4Z" fill="#fafbfd" stroke="#101c38" stroke-width="1" stroke-linejoin="round"/><path d="M4.6 1V7L6.499999999999999 4.7V-0.6999999999999998Z" fill="#e4e9f2"/><rect x="-1.4" y="1" width="6" height="6" fill="#cfe3fb" stroke="#101c38" stroke-width="1"/><rect x="-0.4999999999999999" y="1.9" width="4.2" height="4.2" fill="none" stroke="#f4f8ff" stroke-width=".6"/><circle cx="-6" cy="-6" r="1.9" fill="#3f78d8" stroke="#a9c6f5" stroke-width=".5"/><circle cx="-1.2" cy="-6.2" r="1.9" fill="#d92a20"/><circle cx="-5.8" cy="-1.2" r="1.9" fill="#ef8d1f"/><path d="M-6.7 -2.1L-4.9 -0.3M-4.9 -2.1L-6.7 -0.3" stroke="#ffd9a0" stroke-width=".5"/></g>
<g transform="translate(385,71)"><path d="M-4.5 -3.5L-1.9 -6.1L7.1 -6.1L4.5 -3.5Z" fill="#fcfcfc"/><path d="M4.5 -3.5L7.1 -6.1L7.1 3.9L4.5 6.5Z" fill="#c4c8d0"/><rect x="-4.5" y="-3.5" width="9" height="10" fill="url(#gG)"/><path d="M-4.5 -3.5L4.5 6.5" stroke="#3e6fc4" stroke-width="1"/><path d="M-7 -8.5V-3.5M-9.5 -6H-4.5" stroke="#eee" stroke-width="1"/></g>
<g transform="translate(407,71)"><path d="M-7 -4.5L-3.7 -7.5L6.3 -7.5L3 -4.5Z" fill="#eef4fd" stroke="#2f4f86" stroke-width="0.5" stroke-linejoin="round"/><path d="M3 -4.5L6.3 -7.5L6.3 3.0L3 6.0Z" fill="#9bb9e6" stroke="#2f4f86" stroke-width="0.5" stroke-linejoin="round"/><rect x="-7" y="-4.5" width="10" height="10.5" fill="url(#gB)" stroke="#2f4f86" stroke-width="0.5" stroke-linejoin="round"/><path d="M4 0.5L6 0.5L6.6 4L8.6 7.3H1.6L3.4 4Z" fill="#f0a21d"/><path d="M2 5.5H8.3" stroke="#c66c08" stroke-width=".8"/><rect x="4.3" y="-1.5" width="1.5" height="3" fill="#f4c05a"/></g>
<g transform="translate(429,71)"><path d="M-7.6 -4L-5 -6V4.5L-7.6 6.5Z" fill="#6f96da"/><rect x="-5" y="-6" width="3.6" height="10.5" fill="#e3edfb" stroke="#2f4f86" stroke-width=".5"/><path d="M1.4 -4L4 -6V4.5L1.4 6.5Z" fill="#6f96da"/><rect x="4" y="-6" width="3.6" height="10.5" fill="#e3edfb" stroke="#2f4f86" stroke-width=".5"/><path d="M0 -8.5V8.5" stroke="#e8e8e8" stroke-width=".9" stroke-dasharray="1.2 1"/></g>
<g transform="translate(452,71)"><path d="M-7 -4L-3.7 -7.3L6.8 -7.3L3.5 -4Z" fill="#eef4fd" stroke="#1f3c7c" stroke-width="0.5" stroke-linejoin="round"/><path d="M3.5 -4L6.8 -7.3L6.8 3.7L3.5 7Z" fill="#9bb9e6" stroke="#1f3c7c" stroke-width="0.5" stroke-linejoin="round"/><rect x="-7" y="-4" width="10.5" height="11" fill="#2b4f9a" stroke="#1f3c7c" stroke-width="0.5" stroke-linejoin="round"/><rect x="-5.2" y="-2.2" width="7" height="7.4" fill="#cfe0f7"/><path d="M-3.4 -0.5V3.4H0.3" stroke="#1f3c7c" stroke-width="1.2" fill="none"/></g>
<g transform="translate(475.5,71)"><path d="M-4.5 -4.8L-1.5 -7.8L7.300000000000001 -7.8L4.300000000000001 -4.8Z" fill="#eef4fd" stroke="#2f4f86" stroke-width="0.5" stroke-linejoin="round"/><path d="M4.300000000000001 -4.8L7.300000000000001 -7.8L7.300000000000001 1.2000000000000002L4.300000000000001 4.2Z" fill="#9bb9e6" stroke="#2f4f86" stroke-width="0.5" stroke-linejoin="round"/><rect x="-4.5" y="-4.8" width="8.8" height="9" fill="url(#gB)" stroke="#2f4f86" stroke-width="0.5" stroke-linejoin="round"/><path d="M-7.5 3L-4 6.6L1.8 0.2" stroke="#3ea32d" stroke-width="2.4" fill="none"/></g>
<g transform="translate(509,71)"><path d="M-7.5 -7.5H3L7 -3.5V5H-7.5Z" fill="#d6d6d6"/><path d="M3 -7.5L7 -3.5H3Z" fill="#f6f6f6"/><circle cx="-0.8" cy="-0.3" r="4.6" fill="none" stroke="#5b5b5b" stroke-width="1.6"/><circle cx="-0.8" cy="-0.3" r="2.4" fill="#9a9a9a"/><rect x="-0.8" y="1" width="9" height="7" rx=".8" fill="#2d2d2d" stroke="#f2f2f2" stroke-width="1"/><path d="M1 3.3H2M3.2 3.3H6.6M1 5.7H2M3.2 5.7H6.6" stroke="#f2f2f2" stroke-width="1"/></g>
<g transform="translate(538,71)"><path d="M-7.5 -3.5L-3.5 -7.5H7.5V2.5L3.5 6.5H-7.5Z" fill="#f8f8f8" stroke="#151515" stroke-width="1.25" stroke-linejoin="round"/><path d="M-7.5 -3.5L-3.5 -7.5L7.5 -7.5L3.5 -3.5 Z" fill="url(#gX)"/><path d="M-3.5 -7.5V2.5H7.5M-7.5 6.5L-3.5 2.5" stroke="#b4b8be" stroke-width=".8" fill="none"/><path d="M-7.5 -3.5H3.5V6.5M3.5 -3.5L7.5 -7.5" stroke="#ffffff" stroke-width="1" fill="none"/></g>
<g transform="translate(561,71)"><path d="M-7.5 -3.5L-3.5 -7.5H7.5V2.5L3.5 6.5H-7.5Z" fill="#f8f8f8" stroke="#151515" stroke-width="1.25" stroke-linejoin="round"/><path d="M-7.5 6.5L-3.5 2.5L7.5 2.5L3.5 6.5 Z" fill="url(#gX)"/><path d="M-3.5 -7.5V2.5H7.5M-7.5 6.5L-3.5 2.5" stroke="#b4b8be" stroke-width=".8" fill="none"/><path d="M-7.5 -3.5H3.5V6.5M3.5 -3.5L7.5 -7.5" stroke="#ffffff" stroke-width="1" fill="none"/></g>
<g transform="translate(584,71)"><path d="M-7.5 -3.5L-3.5 -7.5H7.5V2.5L3.5 6.5H-7.5Z" fill="#f8f8f8" stroke="#151515" stroke-width="1.25" stroke-linejoin="round"/><path d="M-7.5 -3.5L-3.5 -7.5L-3.5 2.5L-7.5 6.5 Z" fill="url(#gX)"/><path d="M-3.5 -7.5V2.5H7.5M-7.5 6.5L-3.5 2.5" stroke="#b4b8be" stroke-width=".8" fill="none"/><path d="M-7.5 -3.5H3.5V6.5M3.5 -3.5L7.5 -7.5" stroke="#ffffff" stroke-width="1" fill="none"/></g>
<g transform="translate(607,71)"><path d="M-7.5 -3.5L-3.5 -7.5H7.5V2.5L3.5 6.5H-7.5Z" fill="#f8f8f8" stroke="#151515" stroke-width="1.25" stroke-linejoin="round"/><path d="M3.5 -3.5L7.5 -7.5L7.5 2.5L3.5 6.5 Z" fill="url(#gX)"/><path d="M-3.5 -7.5V2.5H7.5M-7.5 6.5L-3.5 2.5" stroke="#b4b8be" stroke-width=".8" fill="none"/><path d="M-7.5 -3.5H3.5V6.5M3.5 -3.5L7.5 -7.5" stroke="#ffffff" stroke-width="1" fill="none"/></g>
<g transform="translate(630,71)"><path d="M-7.5 -3.5L-3.5 -7.5H7.5V2.5L3.5 6.5H-7.5Z" fill="#f8f8f8" stroke="#151515" stroke-width="1.25" stroke-linejoin="round"/><path d="M-7.5 -3.5L3.5 -3.5L3.5 6.5L-7.5 6.5 Z" fill="url(#gX)"/><path d="M-7.5 -3.5H3.5V6.5M3.5 -3.5L7.5 -7.5" stroke="#ffffff" stroke-width="1" fill="none"/></g>
<g transform="translate(653,71)"><path d="M-7.5 -3.5L-3.5 -7.5H7.5V2.5L3.5 6.5H-7.5Z" fill="#f8f8f8" stroke="#151515" stroke-width="1.25" stroke-linejoin="round"/><path d="M-3.5 -7.5L7.5 -7.5L7.5 2.5L-3.5 2.5 Z" fill="url(#gX)"/><path d="M-3.5 -3.5H3.5V2.5H-3.5Z" fill="#a8aeb8" opacity=".75"/><path d="M-3.5 -7.5V2.5H7.5M-7.5 6.5L-3.5 2.5" stroke="#b4b8be" stroke-width=".8" fill="none"/><path d="M-7.5 -3.5H3.5V6.5M3.5 -3.5L7.5 -7.5" stroke="#ffffff" stroke-width="1" fill="none"/></g>
<g transform="translate(681.4,71)"><path d="M0 -7.2L6 -2.6V2.6L0 7.2L-6 2.6V-2.6Z" fill="#fcfcfc" stroke="#181818" stroke-width="1.2" stroke-linejoin="round"/><path d="M-5.6 -2.4L-5.6 2.4L0 6.7L0 3.4L-3 0.2Z" fill="#7d848e"/><path d="M0 -3L3 0.2L0 3.4L-3 0.2Z" fill="#fdfdfd" stroke="#d4d7db" stroke-width=".4"/><path d="M0 -6.7V-3M0 3.4V6.7M-5.6 -2.4L-3 0.2M5.6 -2.4L3 0.2" stroke="#e6e8eb" stroke-width=".5" fill="none"/></g>
<g transform="translate(704.6,71)"><path d="M0 -7.2L6 -2.6V2.6L0 7.2L-6 2.6V-2.6Z" fill="#fcfcfc" stroke="#181818" stroke-width="1.2" stroke-linejoin="round"/><path d="M5.6 -2.4L5.6 2.4L0 6.7L0 3.4L3 0.2Z" fill="#7d848e"/><path d="M0 -3L3 0.2L0 3.4L-3 0.2Z" fill="#fdfdfd" stroke="#d4d7db" stroke-width=".4"/><path d="M0 -6.7V-3M0 3.4V6.7M-5.6 -2.4L-3 0.2M5.6 -2.4L3 0.2" stroke="#e6e8eb" stroke-width=".5" fill="none"/></g>
<g transform="translate(727.6,71)"><path d="M0 -7.2L6 -2.6V2.6L0 7.2L-6 2.6V-2.6Z" fill="#fcfcfc" stroke="#181818" stroke-width="1.2" stroke-linejoin="round"/><path d="M0 -6.7L5.6 -2.4L5.6 2.4L3 0.2L0 -3Z" fill="#7d848e"/><path d="M0 -3L3 0.2L0 3.4L-3 0.2Z" fill="#fdfdfd" stroke="#d4d7db" stroke-width=".4"/><path d="M0 -6.7V-3M0 3.4V6.7M-5.6 -2.4L-3 0.2M5.6 -2.4L3 0.2" stroke="#e6e8eb" stroke-width=".5" fill="none"/></g>
<g transform="translate(750.5,71)"><path d="M0 -7.2L6 -2.6V2.6L0 7.2L-6 2.6V-2.6Z" fill="#fcfcfc" stroke="#181818" stroke-width="1.2" stroke-linejoin="round"/><path d="M0 -6.7L-5.6 -2.4L-5.6 2.4L-3 0.2L0 -3Z" fill="#7d848e"/><path d="M0 -3L3 0.2L0 3.4L-3 0.2Z" fill="#fdfdfd" stroke="#d4d7db" stroke-width=".4"/><path d="M0 -6.7V-3M0 3.4V6.7M-5.6 -2.4L-3 0.2M5.6 -2.4L3 0.2" stroke="#e6e8eb" stroke-width=".5" fill="none"/></g>
<g transform="translate(780.2,71)"><path d="M-7.5 -3H-4.8L-3.8 -5H1L2 -3H7.5V6.6H-7.5Z" fill="url(#gG)" stroke="#f9f9f9" stroke-width=".7"/><circle cx="0.2" cy="2" r="3.5" fill="#e9ebee" stroke="#4a4f57" stroke-width="1.3"/><circle cx="5.6" cy="-5.2" r="2.9" fill="#f08a1c"/><path d="M5.6 -7.9V-2.5M2.9 -5.2H8.3M3.7 -7.1L7.5 -3.3M7.5 -7.1L3.7 -3.3" stroke="#ffe0b0" stroke-width=".6"/></g><path d="M82.0 62V80" stroke="#9b9b9b" stroke-width="1"/><path d="M81.0 62V80" stroke="#383838" stroke-width="1"/><path d="M272.5 62V80" stroke="#9b9b9b" stroke-width="1"/><path d="M271.5 62V80" stroke="#383838" stroke-width="1"/><path d="M371.5 62V80" stroke="#9b9b9b" stroke-width="1"/><path d="M370.5 62V80" stroke="#383838" stroke-width="1"/><path d="M524.0 62V80" stroke="#9b9b9b" stroke-width="1"/><path d="M523.0 62V80" stroke="#383838" stroke-width="1"/><path d="M667.0 62V80" stroke="#9b9b9b" stroke-width="1"/><path d="M666.0 62V80" stroke="#383838" stroke-width="1"/><path d="M766.5 62V80" stroke="#9b9b9b" stroke-width="1"/><path d="M765.5 62V80" stroke="#383838" stroke-width="1"/><path d="M493.5 63V78 M495.5 63V78" stroke="#1e1e1e" stroke-width="1" stroke-dasharray="1 1"/><path d="M5 90.5H20 M5 92.5H20" stroke="#1e1e1e" stroke-width="1" stroke-dasharray="1 1"/>
<g transform="translate(13.2,107)"><path d="M-6.5 6.5L6.5 -6.5" stroke="#ededed" stroke-width="1.2"/><rect x="-8.0" y="5.0" width="3.0" height="3.0" fill="#c9dcfa" stroke="#3f6fd0" stroke-width=".9"/><rect x="5.0" y="-8.0" width="3.0" height="3.0" fill="#c9dcfa" stroke="#3f6fd0" stroke-width=".9"/></g>
<g transform="translate(13.2,128.8)"><path d="M-5.5 5.5L5.5 -5.5" stroke="#d8d8d8" stroke-width="1.2"/><path d="M-7.3 7.3L-6.6 3.2L-3.2 6.6ZM7.3 -7.3L6.6 -3.2L3.2 -6.6Z" fill="#d8d8d8"/><circle r="1.5" fill="#3f6fd0" stroke="#1c3f92" stroke-width=".6"/></g>
<g transform="translate(13.2,150.6)"><path d="M-6.5 4H0.5C9.3 4.6 9.3 -5 0.5 -4.4" fill="none" stroke="#ededed" stroke-width="1.2"/><rect x="-8.0" y="2.5" width="3.0" height="3.0" fill="#c9dcfa" stroke="#3f6fd0" stroke-width=".9"/><rect x="-1.0" y="2.5" width="3.0" height="3.0" fill="#c9dcfa" stroke="#3f6fd0" stroke-width=".9"/><rect x="-1.0" y="-5.9" width="3.0" height="3.0" fill="#c9dcfa" stroke="#3f6fd0" stroke-width=".9"/></g>
<g transform="translate(13.2,173)"><path d="M0 -7L7 -1.8L4.3 6.3H-4.3L-7 -1.8Z" fill="url(#gG)"/></g>
<g transform="translate(13.2,195)"><rect x="-6.2" y="-3.6" width="12.4" height="8" fill="url(#gG)"/><rect x="-8.0" y="3.5" width="3.0" height="3.0" fill="#c9dcfa" stroke="#3f6fd0" stroke-width=".9"/><rect x="5.2" y="-6.0" width="3.0" height="3.0" fill="#c9dcfa" stroke="#3f6fd0" stroke-width=".9"/></g>
<g transform="translate(13.2,217)"><path d="M-6.5 6.5C-5.5 0 -1 -5.5 6.5 -6.5" fill="none" stroke="#ededed" stroke-width="1.2"/><rect x="-8.0" y="5.0" width="3.0" height="3.0" fill="#c9dcfa" stroke="#3f6fd0" stroke-width=".9"/><rect x="-4.1" y="-4.1" width="3.0" height="3.0" fill="#c9dcfa" stroke="#3f6fd0" stroke-width=".9"/><rect x="5.0" y="-8.0" width="3.0" height="3.0" fill="#c9dcfa" stroke="#3f6fd0" stroke-width=".9"/></g>
<g transform="translate(13.2,238.6)"><circle r="6.8" fill="url(#gS)"/><path d="M0 0L5 -5" stroke="#5d8be0" stroke-width=".9"/><rect x="-1.2" y="-1.2" width="2.4" height="2.4" fill="#c9dcfa" stroke="#3f6fd0" stroke-width=".9"/></g>
<g transform="translate(13.2,260.4)"><path d="M-6.8 -3.5C-7 -6.5 -2.5 -7.3 -0.5 -5.5C2 -7.2 6.6 -6 6.3 -2.5C8 0 7.3 4.3 4.3 4.8C2.5 7.2 -2.5 7.2 -3.8 5.2C-7.2 5.6 -8 1.5 -6.4 -0.3C-7 -1.3 -7 -2.5 -6.8 -3.5Z" fill="url(#gG)"/></g>
<g transform="translate(13.2,282.5)"><path d="M-6.5 7C-6.5 -1 -3.5 -2.5 -1 0.5C2 4 6 2 6.5 -6" fill="none" stroke="#ededed" stroke-width="1.7"/><rect x="-8.0" y="5.5" width="3.0" height="3.0" fill="#c9dcfa" stroke="#3f6fd0" stroke-width=".9"/><rect x="-2.5" y="-0.7" width="3.0" height="3.0" fill="#c9dcfa" stroke="#3f6fd0" stroke-width=".9"/><rect x="5.0" y="-7.5" width="3.0" height="3.0" fill="#c9dcfa" stroke="#3f6fd0" stroke-width=".9"/></g>
<g transform="translate(13.2,304)"><ellipse cx="0" cy="0.5" rx="6.7" ry="3.9" fill="url(#gG)"/><rect x="-8.2" y="-1.0" width="3.0" height="3.0" fill="#c9dcfa" stroke="#3f6fd0" stroke-width=".9"/><rect x="5.2" y="-1.0" width="3.0" height="3.0" fill="#c9dcfa" stroke="#3f6fd0" stroke-width=".9"/><rect x="-1.5" y="-4.9" width="3.0" height="3.0" fill="#c9dcfa" stroke="#3f6fd0" stroke-width=".9"/></g>
<g transform="translate(13.2,326.5)"><path d="M-5.5 -0.5C-5.5 -4 6.8 -4.5 6.8 0C6.8 4 -0.5 4.3 -1 2.8Z" fill="url(#gG)"/><rect x="-7.7" y="-2.0" width="3.0" height="3.0" fill="#c9dcfa" stroke="#3f6fd0" stroke-width=".9"/><rect x="-2.3" y="1.9" width="3.0" height="3.0" fill="#c9dcfa" stroke="#3f6fd0" stroke-width=".9"/></g>
<g transform="translate(13.2,349)"><path d="M-2.5 -7.5H3.5L6.5 -4.5V3.5H-2.5Z" fill="#dce8fa" stroke="#7ea0dc" stroke-width=".6"/><rect x="-5.8" y="-3.6" width="7" height="5.8" fill="url(#gG)"/><circle cx="2.6" cy="2.8" r="4" fill="url(#gS)"/><path d="M7.5 3.5V8H3Z" fill="#111"/><rect x="-7.8" y="1.1" width="3.0" height="3.0" fill="#c9dcfa" stroke="#3f6fd0" stroke-width=".9"/></g>
<g transform="translate(13.2,371.5)"><rect x="-5.8" y="-5.6" width="8.8" height="6.6" fill="url(#gG)"/><circle cx="3" cy="2" r="4.4" fill="url(#gS)"/><rect x="-7.8" y="1.1" width="3.0" height="3.0" fill="#c9dcfa" stroke="#3f6fd0" stroke-width=".9"/></g>
<g transform="translate(13.2,393.5)"><path d="M-7 7.5L0 0.8L7 -6.5M-7 -6.5L0 0.8" stroke="#e2e2e2" stroke-width="1.1" fill="none"/><rect x="-1.2" y="-0.3999999999999999" width="2.4" height="2.4" fill="#c9dcfa" stroke="#3f6fd0" stroke-width=".9"/></g>
<g transform="translate(13.2,415.5)"><rect x="-4.6" y="-4.6" width="9.2" height="9.2" fill="#5c86d4"/><path d="M-4.6 -1.5L-1.5 -4.6M-4.6 1.8L1.8 -4.6M-4.6 4.6L4.6 -4.6M-1.6 4.6L4.6 -1.6M1.6 4.6L4.6 1.6" stroke="#cfe0fa" stroke-width="1"/><path d="M-7.3 -4.6H7.3M-7.3 4.6H7.3M-4.6 -7.3V7.3M4.6 -7.3V7.3" stroke="#f2f2f2" stroke-width="1.2"/><path d="M6 3.6V8.4M3.6 6H8.4" stroke="#5c86d4" stroke-width="1.1"/></g>
<g transform="translate(13.2,437)"><rect x="-4.6" y="-4.6" width="9.2" height="9.2" fill="url(#gB)"/><rect x="-4.6" y="-4.6" width="9.2" height="9.2" fill="#5c86d4" opacity=".35"/><path d="M-7.3 -4.6H7.3M-7.3 4.6H7.3M-4.6 -7.3V7.3M4.6 -7.3V7.3" stroke="#f2f2f2" stroke-width="1.2"/><path d="M6 3.6V8.4M3.6 6H8.4" stroke="#5c86d4" stroke-width="1.1"/></g>
<g transform="translate(13.2,459)"><path d="M-6.5 -5.8H3L6.8 -2V5.8H-6.5Z" fill="url(#gG)" stroke="#fafafa" stroke-width=".6"/><circle cx="-0.6" cy="0.6" r="3.5" fill="#6f9ae4" stroke="#24457f" stroke-width="1"/></g>
<g transform="translate(13.2,480.8)"><rect x="-6.8" y="-6.8" width="13.6" height="13.6" fill="#f0f0f0"/><rect x="-6.8" y="-6.8" width="13.6" height="3" fill="#8d8d8d"/><path d="M-6.8 -6.3H6.8" stroke="#f4f4f4" stroke-width="1"/><path d="M-6.8 -0.2H6.8M-6.8 3.2H6.8M-2.3 -3.8V6.8M2.3 -3.8V6.8" stroke="#b3b3b3" stroke-width=".9"/></g>
<g transform="translate(13.2,502.5)"><text x="0" y="7" font-family="Liberation Sans,sans-serif" font-size="19.5" text-anchor="middle" fill="#f7f7f7">A</text></g><path d="M777 90.5H792 M777 92.5H792" stroke="#1e1e1e" stroke-width="1" stroke-dasharray="1 1"/>
<g transform="translate(784,107)"><path d="M-8.4 7.2H-2.6M-0.2 7.2H7.4" stroke="#f4f4f4" stroke-width="1.2"/><path d="M-3.8 1.8L6 -8.6L8.6 -6.2L-1.2 4.2Z" fill="#e8b738"/><path d="M-3 1.9L6 -7.7L7 -6.8L-2 2.8Z" fill="#fbe38d"/><path d="M-3.8 1.8L6 -8.6" stroke="#3a2608" stroke-width=".9"/><path d="M-3.8 1.8L-1.2 4.2L-0.2 3.1L-2.8 0.7Z" fill="#f6f6f6"/><circle cx="-3.8" cy="4.3" r="2.2" fill="#d8521a"/></g>
<g transform="translate(784,129)"><circle cx="-5" cy="-4.4" r="3.5" fill="url(#gS)"/><circle cx="1.2" cy="2.4" r="3.7" fill="#bcd2f4" stroke="#e6eefb" stroke-width=".6"/><circle cx="4.8" cy="4.6" r="3.3" fill="#a9c4ee" stroke="#e6eefb" stroke-width=".6"/><path d="M0.6 -6.5H5.6V-3.4" stroke="#eee" stroke-width="1.2" fill="none"/><path d="M3.4 -3.8H7.8L5.6 -1Z" fill="#eee"/></g>
<g transform="translate(784,151)"><path d="M-2.2 -6.5V6.2H-8.4Z" fill="url(#gD)"/><path d="M0.4 -6.5V6.2H6.8Z" fill="url(#gB)"/><path d="M-0.9 -8V8" stroke="#f4f4f4" stroke-width="1.1"/></g>
<g transform="translate(784,173.2)"><path d="M7.8 6.3H-5.2C-8.2 6.3 -8.2 0.9 -5.2 0.9H-3.2V-4C-3.2 -8 2.8 -8 2.8 -4V-1.2H7.8" fill="none" stroke="#5f7cc4" stroke-width="3.4"/><path d="M7.8 6.3H-5.2C-8.2 6.3 -8.2 0.9 -5.2 0.9H-3.2V-4C-3.2 -8 2.8 -8 2.8 -4V-1.2H7.8" fill="none" stroke="#f6f6f6" stroke-width="1.1"/></g>
<g transform="translate(784,195)"><rect x="-7" y="-7" width="6" height="6" fill="#f4f4f4" stroke="#8d8d8d" stroke-width=".6"/><rect x="1" y="-7" width="6" height="6" fill="#8db2ee" stroke="#cfe0fa" stroke-width=".8"/><rect x="-7" y="1" width="6" height="6" fill="#8db2ee" stroke="#cfe0fa" stroke-width=".8"/><path d="M1 7L7 1V7Z" fill="#111"/><path d="M1 7L7 1H1Z" fill="#dfe9f8"/></g>
<g transform="translate(784,217)"><path d="M0 -4.5V4.5M-4.5 0H4.5" stroke="#eee" stroke-width="1.6"/><path d="M-3 -4.8L0 -8.2L3 -4.8ZM-3 4.8L0 8.2L3 4.8ZM-4.8 -3L-8.2 0L-4.8 3ZM4.8 -3L8.2 0L4.8 3Z" fill="#f0f0f0"/><rect x="-1.8" y="-1.8" width="3.6" height="3.6" fill="#bcd2f4" stroke="#4b78cf" stroke-width=".8"/></g>
<g transform="translate(784,239)"><path d="M1.5 -6.2A6.4 6.4 0 1 1 -4.4 -4.6" fill="none" stroke="#d9d9d9" stroke-width="1.5"/><path d="M-3.2 -8.6L1.8 -6.2L-2.2 -3Z" fill="#5c8be0"/></g>
<g transform="translate(784,261)"><rect x="-6.8" y="-6.8" width="13.6" height="13.6" fill="url(#gB)"/><rect x="-6.8" y="-6.8" width="13.6" height="2.2" fill="#f0f4fb"/><rect x="-6.8" y="-1.8" width="8.6" height="8.6" fill="url(#gG)" stroke="#666" stroke-width=".5"/></g>
<g transform="translate(784,283)"><path d="M-6.5 -7.5H1.5V7.5H-6.5Z" fill="url(#gG)"/><path d="M1.5 -7.5H4L7.5 7.5H1.5Z" fill="url(#gB)"/><path d="M-3 3.8H3" stroke="#111" stroke-width="1.3"/><path d="M2.2 1.2L5.6 3.8L2.2 6.4Z" fill="#111"/></g>
<g transform="translate(784,304.5)"><path d="M-7.5 0.5H-1" stroke="#eee" stroke-width="1.1"/><path d="M0.5 0.5H7.5" stroke="#8fb2ee" stroke-width="1" stroke-dasharray="1.6 1.2"/><path d="M-3.5 6.5L2.5 -6.5" stroke="#7ea4e8" stroke-width="1.3"/></g>
<g transform="translate(784,326.5)"><path d="M-7.5 0.5H-2.5" stroke="#eee" stroke-width="1.1"/><path d="M-1.5 0.5H4" stroke="#eee" stroke-width="1" stroke-dasharray="1.6 1.2"/><path d="M2 6.5L7.5 -6.5" stroke="#7ea4e8" stroke-width="1.3"/></g>
<g transform="translate(784,349)"><rect x="-7.3" y="-3.2" width="14.6" height="9.4" fill="url(#gG)" stroke="#2c2c2c" stroke-width=".6"/><rect x="2.8" y="-5.2" width="3.2" height="3.2" fill="#6c98e6"/></g>
<g transform="translate(784,371)"><rect x="-7.3" y="-3.2" width="14.6" height="9.4" fill="url(#gG)" stroke="#2c2c2c" stroke-width=".6"/><rect x="-3" y="-3.8" width="6" height="1.4" fill="#545454"/><rect x="-5.6" y="-5.4" width="3.2" height="3.2" fill="#6c98e6"/><rect x="2.4" y="-5.4" width="3.2" height="3.2" fill="#6c98e6"/></g>
<g transform="translate(784,393)"><path d="M-7 0H7" stroke="#eee" stroke-width="1.1"/><path d="M-4.5 -2.4L-0.5 0L-4.5 2.4ZM4.5 -2.4L0.5 0L4.5 2.4Z" fill="#6c98e6"/></g>
<g transform="translate(784,415.5)"><path d="M-6.6 7.2V-1.2L0.8 -7.2H7V7.2Z" fill="url(#gD)" stroke="#2c2c2c" stroke-width=".5"/><path d="M-7.6 -3.4L-1.2 -8.4" stroke="#6c98e6" stroke-width="1.5"/></g>
<g transform="translate(784,437.5)"><path d="M-6 7.2V1.5C-6 -3.5 -2.5 -6.6 2 -6.6H7V7.2Z" fill="url(#gD)" stroke="#2c2c2c" stroke-width=".5"/><path d="M-8 -1.5C-7 -5.5 -4.5 -8 -0.5 -8.6" stroke="#6c98e6" stroke-width="1.7" fill="none"/></g>
<g transform="translate(784,458.5)"><path d="M-6.5 7V3M6.5 -3.5V-7.5" stroke="#dcdcdc" stroke-width="1.2"/><path d="M-6 1.2C-3 -5 -1 -2 0.5 1C2 4 4.5 3.5 6 -0.5" fill="none" stroke="#3f78d8" stroke-width="1.4"/><circle cx="-6" cy="1.4" r="1.7" fill="#1a2f66" stroke="#5a86d8" stroke-width=".6"/><circle cx="6.2" cy="-1" r="1.7" fill="#1a2f66" stroke="#5a86d8" stroke-width=".6"/></g>
<g transform="translate(784,480.5)"><path d="M-2.5 -5.5L3.5 -7.5H7.5L2 -4Z" fill="#eaf1fc"/><path d="M3 -2.5L7.8 -5.5V2.5L3 5.5Z" fill="#9bb9e6"/><path d="M-7.8 -1L-4.6 -3.4V4.6L-7.8 7Z" fill="#b8cff1"/><rect x="-4" y="-2.2" width="7" height="8" fill="url(#gB)" stroke="#eaf1fc" stroke-width=".5"/></g><path d="M777 497.5H792 M777 499.5H792" stroke="#1e1e1e" stroke-width="1" stroke-dasharray="1 1"/>
<g transform="translate(784,509.2)"><rect x="-6.5" y="-5" width="9" height="6" fill="#3c3c3c" stroke="#f2f2f2" stroke-width="1.2"/><rect x="-2.5" y="-0.5" width="9" height="6" fill="#8e8e8e" stroke="#f2f2f2" stroke-width="1.2"/></g><path d="M236.4 469.5V258.4L237.9 253L241.9 241.1L245.9 231.8L251.2 223.9L259.2 214.6L265.8 209.3L279 200.7L286.3 195L309.5 180L330 168.4L360 153.4L396 140.6L408 137.9L444 128L474 123.2L510 120.5L527.6 120.2V136.4H515.7L480 139L450 143L414 152L380 164L354 173.5L340 181.7L312.8 197.4L296 208.2L287 213.9L276.4 221.9L268.4 228.5L261.8 236.5L257.2 245.1L253.9 255.7L252.5 261V469.5Z" fill="none" stroke="#f4f4f4" stroke-width="1.15" stroke-linejoin="round"/><path d="M38.5 454V504.5H89" fill="none" stroke="#e6e6e6" stroke-width="1"/><text transform="translate(46.5,450.2) scale(1.42,1)" font-family="Liberation Sans,sans-serif" font-size="18" text-anchor="middle" fill="#e4e4e4" stroke="#212830" stroke-width=".7">Y</text><text transform="translate(99.5,503) scale(1.5,1)" font-family="Liberation Sans,sans-serif" font-size="18" text-anchor="middle" fill="#e4e4e4" stroke="#212830" stroke-width=".7">X</text><rect x="707" y="102.8" width="10" height="3.2" fill="#f4f4f4"/><rect x="727.9" y="99.7" width="6.2" height="6.4" fill="#212830" stroke="#f4f4f4" stroke-width="2"/><path d="M729.8 98.4V97.3H737.1V104.4H735.4" fill="none" stroke="#f4f4f4" stroke-width="1.3"/><path d="M747.8 99.2L755 105.2M755 99.2L747.8 105.2" stroke="#f4f4f4" stroke-width="2.7"/><path d="M4 521H21M4 524H21" stroke="#9d9d9d" stroke-width="1.6" stroke-dasharray="1.8 1"/><path d="M7.5 533.5L16.5 542M16.5 533.5L7.5 542" stroke="#f6f6f6" stroke-width="2.3"/>
<g transform="translate(12.3,559.8) rotate(-45)"><rect x="-1.5" y="-1" width="3" height="10.5" rx="1.4" fill="#f4f4f4"/><path d="M-4.2 -6.5A4.4 4.4 0 1 0 4.2 -6.5L2 -6.5V-3L0 -1.8L-2 -3V-6.5Z" fill="#f4f4f4"/></g><rect x="30" y="554.5" width="13.5" height="12.5" rx="1.5" fill="#e4e4e4" stroke="#a8a8a8" stroke-width=".8"/><path d="M32.6 557.6L36.6 560.6L32.6 563.6M37.6 564.3H41.4" fill="none" stroke="#333" stroke-width="1.1"/><path d="M47.3 560.0H52.7L50 563.2Z" fill="#8a8a8a"/><rect x="0" y="601.4" width="801" height="1.6" fill="#2c6479"/><rect x="1" y="572" width="799" height="1" fill="#6c6c6c"/><rect x="302.5" y="574.5" width="25" height="25" fill="#4d4d4d" stroke="#6d6d6d" stroke-width="1"/><rect x="328.5" y="574.5" width="102" height="25" fill="#4d4d4d" stroke="#6d6d6d" stroke-width="1"/><rect x="431.5" y="574.5" width="62" height="25" fill="#4d4d4d" stroke="#6d6d6d" stroke-width="1"/><rect x="494.5" y="574.5" width="26" height="25" fill="#4d4d4d" stroke="#6d6d6d" stroke-width="1"/><rect x="521.5" y="574.5" width="25" height="25" fill="#4d4d4d" stroke="#6d6d6d" stroke-width="1"/><rect x="548.5" y="574.5" width="107" height="25" fill="#4d4d4d" stroke="#6d6d6d" stroke-width="1"/><rect x="656.5" y="574.5" width="40" height="25" fill="#4d4d4d" stroke="#6d6d6d" stroke-width="1"/><rect x="697.5" y="574.5" width="25" height="25" fill="#4d4d4d" stroke="#6d6d6d" stroke-width="1"/><rect x="723.5" y="574.5" width="25" height="25" fill="#4d4d4d" stroke="#6d6d6d" stroke-width="1"/><rect x="749.5" y="574.5" width="28" height="25" fill="#4d4d4d" stroke="#6d6d6d" stroke-width="1"/><rect x="778.5" y="574.5" width="23" height="25" fill="#4d4d4d" stroke="#6d6d6d" stroke-width="1"/><path d="M310.6 577.6V586M306.4 581.8H314.8" stroke="#e9e9e9" stroke-width="1.1"/><rect x="312.6" y="588.6" width="10.4" height="4.4" rx="1.2" fill="#e9e9e9"/><path d="M334.8 579V593.6H347" fill="none" stroke="#e9e9e9" stroke-width="1.2"/><path d="M334.8 589.6H338.8V593.6" fill="none" stroke="#e9e9e9" stroke-width="1"/><circle cx="363.6" cy="586.8" r="6.3" fill="none" stroke="#e9e9e9" stroke-width="1.2"/><path d="M363.6 586.8H372M363.6 586.8L370.6 580" stroke="#e9e9e9" stroke-width="1.1"/><path d="M380.1 584.6H387.1L383.6 588.6Z" fill="#e9e9e9"/><path d="M403.6 577.5V596" stroke="#bdbdbd" stroke-width="1.2"/><path d="M396 578.5L411 595" stroke="#bdbdbd" stroke-width="1.5"/><circle cx="403.6" cy="586.8" r="1.1" fill="#4d4d4d" stroke="#ddd" stroke-width=".5"/><path d="M419.1 584.6H426.1L422.6 588.6Z" fill="#e9e9e9"/><path d="M449.4 580.4L435.6 593.6H451.4" fill="none" stroke="#2b86f0" stroke-width="1.7" stroke-linejoin="round"/><rect x="440.2" y="586" width="3.2" height="3.2" fill="#2b86f0"/><rect x="461.6" y="581" width="12.6" height="11.8" fill="none" stroke="#2b86f0" stroke-width="1.5"/><rect x="460.4" y="579.8" width="4.4" height="4.4" fill="#0b1a0b"/><rect x="461.6" y="581" width="2" height="2" fill="#35e044"/><path d="M483.2 584.6H490.2L486.7 588.6Z" fill="#e9e9e9"/><rect x="499" y="580.2" width="16" height="1.5" fill="#e9e9e9"/><rect x="499" y="583.8" width="10" height="2.3" fill="#e9e9e9"/><rect x="499" y="588.4" width="16" height="1.5" fill="#e9e9e9"/><rect x="499" y="590.6" width="10" height="3" fill="#cfcfcf"/><path d="M527.6 581V594H540.5" fill="none" stroke="#e9e9e9" stroke-width="1.1"/><path d="M526 582.4L527.6 579.6L529.2 582.4ZM539.4 592.4L542.2 594L539.4 595.6Z" fill="#e9e9e9"/><path d="M528 593.6L535 586.5" stroke="#e9e9e9" stroke-width="1"/><path d="M537.5 580.4L541 580.4L539 583.6L541.6 583.6L536.4 588.6L537.6 585L535.4 585Z" fill="#e9e9e9"/>
<g transform="translate(561,587.2)"><path d="M-0.8 -10L1.6 -10L2.8 -3L8.3 7.6L3.6 6.4L0.3 2.2L-3.4 6.4L-8.3 7.6L-2.6 -2.4Z" fill="#2b86f0"/><circle cx="4.6" cy="-4.6" r="2.6" fill="#4d4d4d" stroke="#2b86f0" stroke-width="1.2"/></g>
<g transform="translate(585,587.2)"><path d="M-0.8 -10L1.6 -10L2.8 -3L8.3 7.6L3.6 6.4L0.3 2.2L-3.4 6.4L-8.3 7.6L-2.6 -2.4Z" fill="#c6c6c6"/><path d="M4.4 -9L2.2 -5H4.6L2.8 -1L7.4 -6.2H5L6.8 -9Z" fill="#e6e6e6" stroke="#4d4d4d" stroke-width=".6"/></g>
<g transform="translate(609,587.2)"><path d="M-0.8 -10L1.6 -10L2.8 -3L8.3 7.6L3.6 6.4L0.3 2.2L-3.4 6.4L-8.3 7.6L-2.6 -2.4Z" fill="#c6c6c6"/></g><text x="633" y="591" font-family="Liberation Sans,sans-serif" font-size="10" text-anchor="middle" fill="#e0e0e0">1:1</text><path d="M643.5 584.6H650.5L647 588.6Z" fill="#e9e9e9"/><circle cx="669" cy="586" r="3.6" fill="none" stroke="#dcdcdc" stroke-width="3" stroke-dasharray="1.9 1"/><path d="M684.5 584.6H691.5L688 588.6Z" fill="#e9e9e9"/><path d="M710 579.5V594M702.8 586.8H717.2" stroke="#dcdcdc" stroke-width="1.6"/><rect x="731" y="580" width="9.4" height="12.6" fill="none" stroke="#dcdcdc" stroke-width="1"/><path d="M733 583H738.4M733 586H738.4M733 589H738.4" stroke="#dcdcdc" stroke-width="1.3" stroke-dasharray="1.3 .8"/><rect x="756.5" y="579" width="7" height="6.4" fill="none" stroke="#dcdcdc" stroke-width="1"/><circle cx="768" cy="585.4" r="3" fill="none" stroke="#dcdcdc" stroke-width="1"/><path d="M761.6 588.4L765.4 594.6H757.8Z" fill="none" stroke="#dcdcdc" stroke-width="1"/><circle cx="790.4" cy="587" r="9" fill="#1565d8" stroke="#4b93f5" stroke-width=".8"/><path d="M787 590.6L794 583.8" stroke="#8dbcff" stroke-width="1.1"/></svg>
<div id="wm" class="abs">头条 @小黄花CAD</div>
</div></body></html>
